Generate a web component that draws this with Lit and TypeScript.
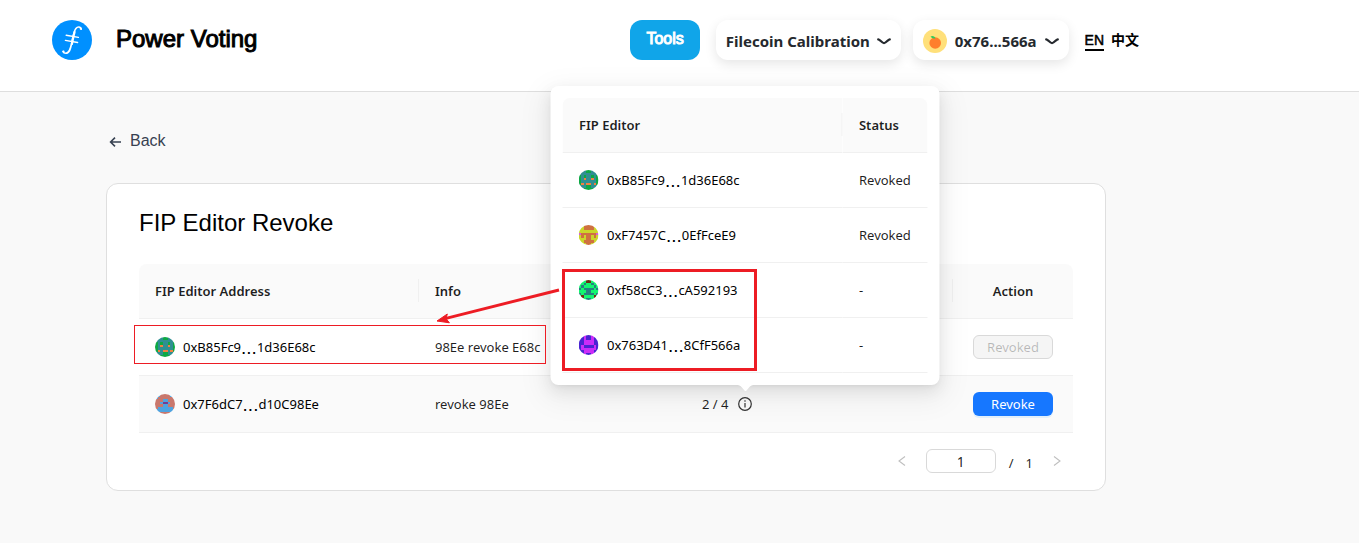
import { LitElement, html, css, svg } from "lit";
import { customElement, property } from "lit/decorators.js";

interface Identicon {
  colors: [string, string, string];
  rows: string[];
}

/* Each row holds the left four cells; the right four mirror them. */
const identicons: Record<string, Identicon> = {
  b85: {
    colors: ["#2f8f92", "#0da845", "#f08042"],
    rows: ["0001", "0000", "1010", "1020", "1000", "1202", "0001", "0011"],
  },
  f745: {
    colors: ["#cbd72a", "#cf7140", "#d75fd0"],
    rows: ["0011", "0011", "0000", "2111", "0101", "0001", "0011", "0001"],
  },
  f58: {
    colors: ["#13f66f", "#278081", "#6b2f12"],
    rows: ["0002", "0010", "0100", "1011", "0001", "1011", "0200", "0001"],
  },
  x763: {
    colors: ["#cc2cf8", "#4a24d2", "#4a24d2"],
    rows: ["1101", "1101", "1100", "1100", "1011", "1000", "1100", "1101"],
  },
  x7f6: {
    colors: ["#4fa3df", "#c9776c", "#7a3c8c"],
    rows: ["0011", "0111", "1110", "1102", "1110", "1000", "0000", "0111"],
  },
};

const font = css`"Noto Sans", "Open Sans", sans-serif`;

@customElement("identicon-mark")
class IdenticonMark extends LitElement {
  @property() name = "";
  static styles = css`
    :host { display: block; width: 20px; height: 20px; border-radius: 50%; overflow: hidden; flex: none; }
    svg { display: block; width: 100%; height: 100%; }
  `;
  render() {
    const icon = identicons[this.name];
    return html`<svg viewBox="0 0 8 8" shape-rendering="crispEdges" aria-hidden="true">
      ${icon.rows.map((row, y) =>
        [...row, ...[...row].reverse()].map(
          (cell, x) => svg`<rect x=${x} y=${y} width="1" height="1" fill=${icon.colors[Number(cell)]}></rect>`
        )
      )}
    </svg>`;
  }
}

@customElement("editor-address")
class EditorAddress extends LitElement {
  @property() icon = "";
  @property() start = "";
  @property() end = "";
  static styles = css`
    :host { display: flex; align-items: center; gap: 8px; color: #000; }
    a { color: inherit; text-decoration: none; white-space: nowrap; }
    .dots { font-family: "Liberation Sans", sans-serif; font-size: 19px; line-height: 12px; vertical-align: -2px; }
  `;
  render() {
    return html`<identicon-mark name=${this.icon}></identicon-mark>
      <a href="#">${this.start}<span class="dots">...</span>${this.end}</a>`;
  }
}

const tableStyles = css`
  table { width: 100%; border-collapse: separate; border-spacing: 0; table-layout: fixed; }
  th, td { padding: 16px; text-align: left; border-bottom: 1px solid #f0f0f0; line-height: 22px; font-size: 13px; }
  th { position: relative; background: #fafafa; font-weight: 600; color: rgba(0, 0, 0, 0.88); }
  th:first-child { border-top-left-radius: 8px; }
  th:last-child { border-top-right-radius: 8px; }
  th:not(:last-child)::after {
    content: ""; position: absolute; right: 0; top: 15px; width: 1px; height: 23px; background: #f0f0f0;
  }
  .wide { width: 280px; }
  th, td { box-sizing: border-box; }
`;

@customElement("vote-popover")
class VotePopover extends LitElement {
  static styles = [
    tableStyles,
    css`
      :host {
        display: block; box-sizing: border-box; width: 389px; padding: 12px; background: #fff; border-radius: 8px;
        box-shadow: 0 6px 16px 0 rgba(0, 0, 0, 0.08), 0 3px 6px -4px rgba(0, 0, 0, 0.12),
          0 9px 28px 8px rgba(0, 0, 0, 0.05);
      }
      .tip { position: absolute; top: 100%; left: 50%; width: 16px; height: 6px; transform: translateX(-50%); }
    `,
  ];
  rows = [
    ["b85", "0xB85Fc9", "1d36E68c", "Revoked"],
    ["f745", "0xF7457C", "0EfFceE9", "Revoked"],
    ["f58", "0xf58cC3", "cA592193", "-"],
    ["x763", "0x763D41", "8CfF566a", "-"],
  ];
  render() {
    return html`<table>
        <thead><tr><th class="wide">FIP Editor</th><th>Status</th></tr></thead>
        <tbody>
          ${this.rows.map(
            ([icon, start, end, status]) => html`<tr>
              <td><editor-address icon=${icon} start=${start} end=${end}></editor-address></td>
              <td>${status}</td>
            </tr>`
          )}
        </tbody>
      </table>
      <svg class="tip" viewBox="0 0 16 6" aria-hidden="true"><path d="M0 0C2 0 3 1 4 2L7 5.4Q8 6.4 9 5.4L12 2C13 1 14 0 16 0Z" fill="#fff"/></svg>`;
  }
}

@customElement("app-root")
class AppRoot extends LitElement {
  static styles = [
    tableStyles,
    css`
      :host {
        display: block; min-height: 100vh; background: #f9f9f9; color: rgba(0, 0, 0, 0.88);
        font-family: ${font}; font-size: 13px; line-height: 22px;
      }
      * { box-sizing: border-box; }
      button, input { font: inherit; }
      header { background: #fff; border-bottom: 1px solid #dedede; }
      .bar {
        display: flex; align-items: center; justify-content: space-between;
        max-width: 1139px; height: 91px; padding: 0 0 11px 52px;
      }
      .brand { display: flex; align-items: center; gap: 24px; }
      .logo { width: 40px; height: 40px; }
      .name {
        padding-bottom: 2px; font-family: "Liberation Sans", Arial, sans-serif; font-size: 24px; line-height: 32px;
        color: #000; -webkit-text-stroke: 1px #000;
      }
      .nav { display: flex; align-items: center; gap: 16px; }
      .pills { display: flex; gap: 12px; }
      .tools {
        height: 40px; padding: 0 16px 2px; border: 0; border-radius: 12px; background: #10a5e9; color: #fff;
        font-family: "Liberation Sans", Arial, sans-serif; font-size: 16px; -webkit-text-stroke: 1px #fff;
      }
      .pill {
        display: flex; align-items: center; gap: 7px; height: 40px; padding: 2px 10px 0; border: 0;
        border-radius: 12px; background: #fff; color: #25292e; font-size: 15px; font-weight: 700;
        box-shadow: 0 4px 12px rgba(0, 0, 0, 0.1);
      }
      .wallet { gap: 8px; }
      .pill svg { display: block; }
      .langs {
        display: flex; gap: 7px; padding-top: 2px; font-family: "Liberation Sans", "Noto Sans CJK SC", sans-serif;
        font-size: 14px;
      }
      .langs a { color: #000; text-decoration: none; line-height: 18px; border-bottom: 2px solid transparent; font-weight: 500; }
      .langs .on { border-color: #000; -webkit-text-stroke: 0.5px #000; }
      .langs .zh { font-weight: 700; }
      main { padding: 37px 106px 52px; }
      .content { max-width: 1000px; }
      .back {
        display: inline-flex; align-items: center; gap: 8px; padding-left: 3px; margin-bottom: 30px; color: #374151;
        text-decoration: none; font-family: "Liberation Sans", Arial, sans-serif; font-size: 16px; line-height: 24px;
      }
      .card {
        position: relative; background: #fff; border: 1px solid #dfdfdf; border-radius: 12px; padding: 23px 32px 17px;
      }
      h1 {
        margin: 0 0 25px; font-family: "Liberation Sans", Arial, sans-serif; font-size: 24px; line-height: 32px;
        font-weight: 400; color: #000;
      }
      .list td { padding: 17px 16px; white-space: nowrap; }
      .list tbody tr:last-child { background: #fafafa; }
      .list .act { width: 120px; text-align: center; }
      .list td.act { padding: 0 16px; }
      .act button {
        display: block; width: 80px; height: 24px; margin: 0 auto; padding: 0; border: 0; border-radius: 6px;
        color: #fff; background: #1677ff; line-height: 22px; box-shadow: 0 2px 0 rgba(5, 145, 255, 0.1);
      }
      .act button:disabled {
        border: 1px solid #d9d9d9; color: rgba(0, 0, 0, 0.25); background: #f5f5f5; box-shadow: none;
      }
      .votes { display: flex; align-items: center; gap: 10px; }
      .info { position: relative; display: block; width: 14px; height: 14px; padding: 0; border: 0; background: none; }
      .info svg { display: block; }
      .anchor { position: relative; }
      vote-popover { position: absolute; bottom: 26px; left: 50%; transform: translateX(-50%); z-index: 2; white-space: normal; }
      .pager { display: flex; justify-content: flex-end; align-items: center; margin-top: 16px; }
      .pager button { display: grid; place-items: center; width: 24px; height: 24px; padding: 0; border: 0; background: none; }
      .pager button:last-child { margin-right: 4px; }
      .pager input {
        width: 70px; height: 24px; margin: 0 13px 0 12px; padding: 1px 6px 0; border: 1px solid #d9d9d9; border-radius: 6px;
        text-align: center; color: rgba(0, 0, 0, 0.88); background: #fff; font-size: 14px;
      }
      .pager .total { display: flex; gap: 12px; margin-right: 12px; padding-top: 4px; line-height: 20px; }
      .marks { position: absolute; left: 0; top: 0; z-index: 3; overflow: visible; pointer-events: none; }
    `,
  ];

  chevron() {
    return html`<svg width="14" height="7" viewBox="0 0 14 7" fill="none" aria-hidden="true">
      <path d="M1.2 1.3Q2 1.4 3 2.4L5.6 4.5Q7 5.6 8.4 4.5L11 2.4Q12 1.4 12.8 1.3" stroke="#25292e" stroke-width="2.2" stroke-linecap="round"/></svg>`;
  }

  render() {
    return html`
      <header>
        <div class="bar">
          <div class="brand">
            <svg class="logo" viewBox="0 0 40 40" aria-hidden="true">
              <circle cx="20" cy="20" r="20" fill="#0090ff"/>
              <g fill="none" stroke="#fff" stroke-linecap="round">
                <path d="M29.2 9.2C28.7 6.7 25.8 6.2 23.9 8.5C21.6 11.3 20.7 18 19.6 23.5C18.4 29.4 17.4 33.3 13.8 33.3C12.2 33.3 11.3 32.3 11 31.4" stroke-width="1.6"/>
                <path d="M22.6 12C21.4 16 20.8 20 19.9 24" stroke-width="2.2"/>
                <path d="M14.2 15.3L26.4 17.4M13.4 20.4L25.6 22.5" stroke-width="1.4"/>
              </g>
              <circle cx="28.8" cy="8.7" r="1.1" fill="#fff"/><circle cx="11.5" cy="31.5" r="1.1" fill="#fff"/>
            </svg>
            <span class="name">Power Voting</span>
          </div>
          <nav class="nav">
            <button class="tools">Tools</button>
            <div class="pills">
              <button class="pill">Filecoin Calibration ${this.chevron()}</button>
              <button class="pill wallet">
                <svg width="24" height="24" viewBox="0 0 24 24" aria-hidden="true">
                  <circle cx="12" cy="12" r="12" fill="#ffe07a"/><circle cx="12.2" cy="14" r="5.8" fill="#ff7f2c"/>
                  <path d="M7.5 7.6Q10.5 5.9 12.6 9.2Q9.5 10.5 7.5 7.6Z" fill="#2ec95c"/>
                </svg>
                0x76...566a ${this.chevron()}
              </button>
            </div>
            <div class="langs"><a class="on" href="#en">EN</a><a class="zh" href="#zh">中文</a></div>
          </nav>
        </div>
      </header>
      <main>
        <div class="content">
          <a class="back" href="#back">
            <svg width="13" height="12" viewBox="0 0 13 12" fill="none" stroke="#374151" stroke-width="1.6" aria-hidden="true">
              <path d="M12 7H2M6 2.6L1.6 7L6 11.4"/></svg>
            Back
          </a>
          <section class="card">
            <h1>FIP Editor Revoke</h1>
            <table class="list">
              <thead>
                <tr><th class="wide">FIP Editor Address</th><th>Info</th><th></th><th class="act">Action</th></tr>
              </thead>
              <tbody>
                <tr>
                  <td><editor-address icon="b85" start="0xB85Fc9" end="1d36E68c"></editor-address></td>
                  <td>98Ee revoke E68c</td>
                  <td></td>
                  <td class="act"><button disabled>Revoked</button></td>
                </tr>
                <tr>
                  <td><editor-address icon="x7f6" start="0x7F6dC7" end="d10C98Ee"></editor-address></td>
                  <td>revoke 98Ee</td>
                  <td>
                    <div class="votes">
                      2 / 4
                      <div class="anchor">
                        <button class="info" aria-label="Votes">
                          <svg width="14" height="14" viewBox="0 0 14 14" aria-hidden="true">
                            <circle cx="7" cy="7" r="6.3" fill="none" stroke="#333" stroke-width="1.2"/>
                            <path d="M7 6v4.4" stroke="#333" stroke-width="1.2"/><circle cx="7" cy="4" r="0.8" fill="#333"/>
                          </svg>
                        </button>
                        <vote-popover></vote-popover>
                      </div>
                    </div>
                  </td>
                  <td class="act"><button>Revoke</button></td>
                </tr>
              </tbody>
            </table>
            <div class="pager">
              <button aria-label="Previous page" disabled>
                <svg width="8" height="12" viewBox="0 0 8 12" fill="none" stroke="#bfbfbf" stroke-width="1.1"><path d="M7 1.5L1 6L7 10.5"/></svg>
              </button>
              <input aria-label="Page" .value=${"1"} />
              <span class="total"><span>/</span><span>1</span></span>
              <button aria-label="Next page" disabled>
                <svg width="8" height="12" viewBox="0 0 8 12" fill="none" stroke="#bfbfbf" stroke-width="1.1"><path d="M1 1.5L7 6L1 10.5"/></svg>
              </button>
            </div>
            <svg class="marks" width="660" height="200" viewBox="0 0 660 200" fill="none" stroke="#ed1c24" aria-hidden="true">
              <rect x="27.5" y="141.5" width="411" height="38"/>
              <rect x="456.5" y="86.5" width="192" height="99" stroke-width="3"/>
              <path d="M452 106L338 134.6" stroke-width="3"/>
              <path d="M330 137L340.3 130L339 134.6L342.4 138.8Z" fill="#ed1c24" stroke-width="1"/>
            </svg>
          </section>
        </div>
      </main>
    `;
  }
}
